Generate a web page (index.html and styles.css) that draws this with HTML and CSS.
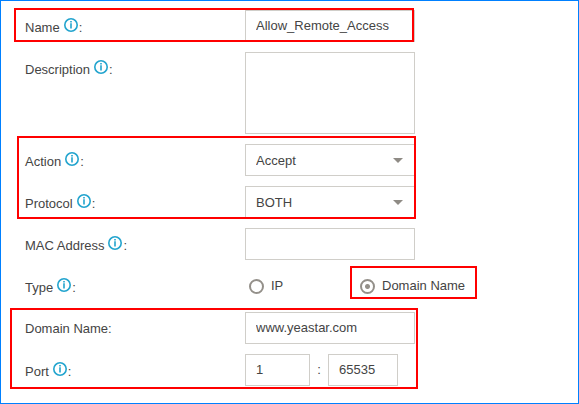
FILE: index.html
```html
<!DOCTYPE html>
<html lang="en">
<head>
<meta charset="utf-8">
<title>Firewall Rule</title>
<link rel="stylesheet" href="styles.css">
</head>
<body>
<svg class="sprite" aria-hidden="true">
  <symbol id="info" viewBox="0 0 14 14">
    <circle cx="7" cy="7" r="6.2" fill="none" stroke="#22a4ce" stroke-width="1.6"/>
    <path d="M6.2 3h1.6v1.4H6.2zM6.2 5.2h1.6V10.6H6.2z" fill="#22a4ce"/>
  </symbol>
  <symbol id="caret" viewBox="0 0 10 5">
    <path d="M0 0h10L5 5z" fill="#8f8b85"/>
  </symbol>
</svg>
<form class="form">
  <div class="group mark mark-name">
    <div class="row">
      <label class="label" for="name">Name<svg class="info"><use href="#info"/></svg>:</label>
      <input class="field" id="name" type="text" value="Allow_Remote_Access">
    </div>
  </div>
  <div class="group">
    <div class="row">
      <label class="label" for="description">Description<svg class="info"><use href="#info"/></svg>:</label>
      <textarea class="field area" id="description"></textarea>
    </div>
  </div>
  <div class="group mark mark-action">
    <div class="row">
      <label class="label" for="action">Action<svg class="info"><use href="#info"/></svg>:</label>
      <div class="select">
        <select class="field" id="action"><option>Accept</option></select>
        <svg class="caret"><use href="#caret"/></svg>
      </div>
    </div>
    <div class="row">
      <label class="label" for="protocol">Protocol<svg class="info"><use href="#info"/></svg>:</label>
      <div class="select">
        <select class="field" id="protocol"><option>BOTH</option></select>
        <svg class="caret"><use href="#caret"/></svg>
      </div>
    </div>
  </div>
  <div class="group">
    <div class="row">
      <label class="label" for="mac">MAC Address<svg class="info"><use href="#info"/></svg>:</label>
      <input class="field" id="mac" type="text">
    </div>
    <div class="row" role="radiogroup" aria-labelledby="type-label">
      <span class="label" id="type-label">Type<svg class="info"><use href="#info"/></svg>:</span>
      <div class="radios">
        <label class="choice"><input class="radio" type="radio" name="type">IP</label>
        <label class="choice mark mark-type"><input class="radio" type="radio" name="type" checked>Domain Name</label>
      </div>
    </div>
  </div>
  <div class="group mark mark-domain">
    <div class="row">
      <label class="label" for="domain">Domain Name:</label>
      <input class="field" id="domain" type="text" value="www.yeastar.com">
    </div>
    <div class="row">
      <label class="label" for="port-from">Port<svg class="info"><use href="#info"/></svg>:</label>
      <div class="ports">
        <input class="field port-from" id="port-from" type="text" value="1">
        <span class="colon">:</span>
        <input class="field port-to" type="text" value="65535" aria-label="Last port">
      </div>
    </div>
  </div>
</form>
</body>
</html>
```
FILE: styles.css
```css
*,
*::after {
  box-sizing: border-box;
}

body {
  margin: 0;
  background: #fff;
  color: #444;
  font: 13px/32px "Liberation Sans", Arial, sans-serif;
}

.sprite {
  position: absolute;
  width: 0;
  height: 0;
}

.form {
  min-height: 100vh;
  padding: 9px 24px;
  border: 1px solid #0080ff;
}

.form,
.group {
  display: flex;
  flex-direction: column;
  gap: 10px;
}

.row {
  display: grid;
  grid-template-columns: 220px 1fr;
  align-items: start;
}

.label {
  display: flex;
  align-items: center;
  height: 32px;
  padding-top: 2px;
}

.label:has(.info) {
  padding-top: 4px;
}

.info {
  width: 14px;
  height: 14px;
  margin: 0 1px 6px 4px;
}

.field {
  display: block;
  width: 170px;
  height: 32px;
  margin: 0;
  padding: 0 10px;
  border: 1px solid #d0cec9;
  border-radius: 0;
  outline: 0;
  background: #fff;
  color: inherit;
  font: inherit;
  appearance: none;
}

.area {
  height: 82px;
  resize: none;
}

.select {
  position: relative;
  width: 170px;
}

.caret {
  position: absolute;
  top: 14px;
  right: 12px;
  width: 10px;
  height: 5px;
  pointer-events: none;
}

.radios {
  display: grid;
  grid-template-columns: 111px max-content;
  padding-left: 4px;
}

.choice {
  display: flex;
  align-items: center;
  gap: 7px;
}

.radio {
  width: 15px;
  height: 15px;
  margin: 0;
  border: 2px solid #94908a;
  border-radius: 50%;
  background: #fff;
  appearance: none;
}

.radio:checked {
  background: radial-gradient(circle, #94908a 2px, #fff 3px);
}

.ports {
  display: flex;
}

.port-from {
  width: 65px;
}

.colon {
  width: 18px;
  text-align: center;
}

.port-to {
  width: 70px;
}

/* Highlight frames drawn over the fields */
.mark {
  position: relative;
}

.mark::after {
  content: "";
  position: absolute;
  border: 2px solid #f00;
  pointer-events: none;
}

.mark-name::after {
  inset: -2px auto 0 -11px;
  width: 400px;
}

.mark-action::after {
  inset: -8px auto -1px -8px;
  width: 399px;
}

.mark-type::after {
  inset: -4px -12px 3px -10px;
}

.mark-domain::after {
  inset: -4px auto -3px -15px;
  width: 408px;
}
```
